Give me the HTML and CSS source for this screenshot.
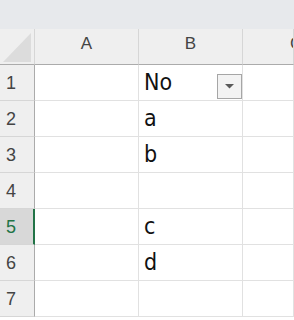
FILE: index.html
```html
<!DOCTYPE html>
<html>
<head>
	<title>Sheet1</title>
	<link rel="stylesheet" href="styles.css">
</head>

<body>
	<div class="ribbon"></div>
	<table class="sheet">
		<colgroup>
			<col class="col-head">
			<col class="col-cell">
			<col class="col-cell">
			<col>
		</colgroup>
		<tr class="colhead">
			<th class="corner">
				<svg width="34" height="35" viewBox="0 0 34 35"><polygon points="3,33 31,33 31,4" fill="#dcdcdc"/></svg>
			</th>
			<th>A</th>
			<th>B</th>
			<th>C</th>
		</tr>
		<tr>
			<th class="rownum">1</th>
			<td></td>
			<td class="filter">No<span class="dropbtn"><svg width="9" height="5" viewBox="0 0 9 5"><polygon points="0,0 9,0 4.5,4.5" fill="#5a5a5a"/></svg></span></td>
			<td></td>
		</tr>
		<tr>
			<th class="rownum">2</th>
			<td></td>
			<td>a</td>
			<td></td>
		</tr>
		<tr>
			<th class="rownum">3</th>
			<td></td>
			<td>b</td>
			<td></td>
		</tr>
		<tr>
			<th class="rownum">4</th>
			<td></td>
			<td></td>
			<td></td>
		</tr>
		<tr>
			<th class="rownum active">5</th>
			<td></td>
			<td>c</td>
			<td></td>
		</tr>
		<tr>
			<th class="rownum">6</th>
			<td></td>
			<td>d</td>
			<td></td>
		</tr>
		<tr>
			<th class="rownum">7</th>
			<td></td>
			<td></td>
			<td></td>
		</tr>
	</table>
</body>
</html>
```

FILE: styles.css
```css
*{
	margin:0;
	padding:0;
	box-sizing:border-box;
}

body{
	width:294px;
	height:320px;
	overflow:hidden;
	background-color:#fff;
	font-family:"Liberation Sans",Arial,sans-serif;
}

.ribbon{
	height:29px;
	background-color:#e7e9ec;
}

.sheet{
	border-collapse:separate;
	border-spacing:0;
	table-layout:fixed;
	width:294px;
}

.col-head{
	width:35px;
}

.col-cell{
	width:104px;
}

.sheet tr{
	height:36px;
}

.sheet th{
	background-color:#efefef;
	color:#444;
	font-weight:normal;
	font-size:17px;
	border-right:1px solid #d6d6d6;
	border-bottom:1px solid #ababab;
}

.colhead th{
	vertical-align:top;
	padding-top:5px;
	text-align:center;
	white-space:nowrap;
	overflow:hidden;
}

.colhead th:last-child{
	text-align:left;
	padding-left:47px;
}

.sheet th.corner{
	padding:0;
	line-height:0;
}

.sheet th.rownum{
	text-align:left;
	padding-left:6px;
	padding-top:2px;
	font-size:18px;
	border-bottom:1px solid #d6d6d6;
	border-right:1px solid #ababab;
}

.sheet th.active{
	background-color:#d8d8d8;
	color:#217346;
	border-right:2px solid #217346;
}

.sheet td{
	border-right:1px solid #e1e1e1;
	border-bottom:1px solid #e1e1e1;
	vertical-align:bottom;
	padding:0 0 5px 5px;
	font-family:"Liberation Sans Narrow","DejaVu Sans Condensed","Liberation Sans",sans-serif;
	font-size:23px;
	color:#111;
}

.filter{
	position:relative;
}

.dropbtn{
	position:absolute;
	right:0;
	bottom:1px;
	width:25px;
	height:25px;
	border:1px solid #a6a6a6;
	background-color:#f3f3f3;
	display:flex;
	align-items:center;
	justify-content:center;
}
```
